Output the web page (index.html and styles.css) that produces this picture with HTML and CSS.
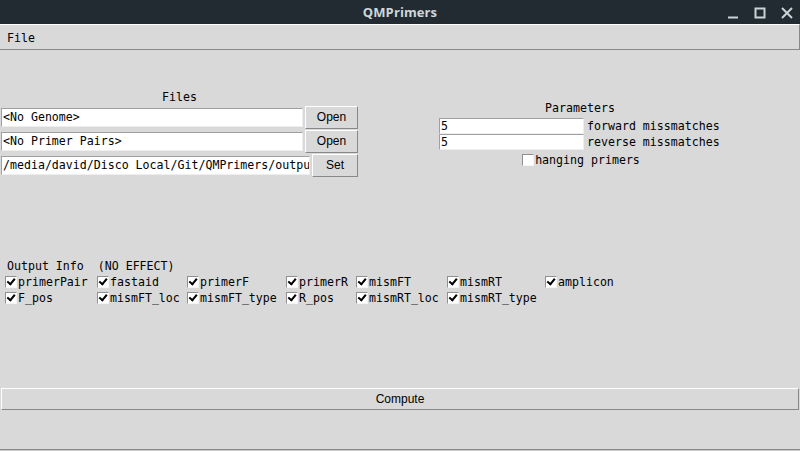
FILE: index.html
```html
<!DOCTYPE html>
<html>
<head>
<meta charset="utf-8">
<link rel="stylesheet" href="styles.css">
</head>
<body>
<div class="window">
  <div class="titlebar">
    <span></span>
    <span class="title">QMPrimers</span>
    <span class="controls">
      <svg width="12" height="12" viewBox="0 0 12 12"><path d="M1 10.5h10" stroke="#c9d3d8" stroke-width="2"/></svg>
      <svg width="12" height="12" viewBox="0 0 12 12"><rect x="1.5" y="1.5" width="9" height="9" fill="none" stroke="#c9d3d8" stroke-width="2"/></svg>
      <svg width="12" height="12" viewBox="0 0 12 12"><path d="M1 1L11 11M11 1L1 11" stroke="#c9d3d8" stroke-width="2"/></svg>
    </span>
  </div>
  <div class="menubar"><span class="menu">File</span></div>
  <div class="main">
    <div class="top">
      <div class="files">
        <div class="frame-label">Files</div>
        <div class="frow">
          <div class="entry e1">&lt;No Genome&gt;</div>
          <div class="btn b-open">Open</div>
        </div>
        <div class="frow">
          <div class="entry e1">&lt;No Primer Pairs&gt;</div>
          <div class="btn b-open">Open</div>
        </div>
        <div class="frow">
          <div class="entry e3">/media/david/Disco Local/Git/QMPrimers/outpu</div>
          <div class="btn b-set">Set</div>
        </div>
      </div>
      <div class="params">
        <div class="frame-label">Parameters</div>
        <div class="prow"><div class="entry pe">5</div><span class="lbl">forward missmatches</span></div>
        <div class="prow"><div class="entry pe">5</div><span class="lbl">reverse missmatches</span></div>
        <div class="hang"><span class="cb"></span><span class="lbl">hanging primers</span></div>
      </div>
    </div>
    <div class="output-label">Output Info  (NO EFFECT)</div>
    <div class="checks">
      <div class="ck"><span class="cb on"></span>primerPair</div>
      <div class="ck"><span class="cb on"></span>fastaid</div>
      <div class="ck"><span class="cb on"></span>primerF</div>
      <div class="ck"><span class="cb on"></span>primerR</div>
      <div class="ck"><span class="cb on"></span>mismFT</div>
      <div class="ck"><span class="cb on"></span>mismRT</div>
      <div class="ck"><span class="cb on"></span>amplicon</div>
      <div class="ck"><span class="cb on"></span>F_pos</div>
      <div class="ck"><span class="cb on"></span>mismFT_loc</div>
      <div class="ck"><span class="cb on"></span>mismFT_type</div>
      <div class="ck"><span class="cb on"></span>R_pos</div>
      <div class="ck"><span class="cb on"></span>mismRT_loc</div>
      <div class="ck"><span class="cb on"></span>mismRT_type</div>
    </div>
    <div class="compute">Compute</div>
  </div>
  <div class="bottom"></div>
</div>
</body>
</html>
```
FILE: styles.css
```css
html, body {
  margin: 0;
  padding: 0;
}
body {
  width: 800px;
  height: 451px;
  overflow: hidden;
  background: #d9d9d9;
  font-family: "DejaVu Sans Mono", "Liberation Mono", monospace;
  font-size: 11.6px;
  color: #000;
}
.window {
  display: flex;
  flex-direction: column;
  height: 451px;
}
.titlebar {
  height: 24px;
  background: #222b31;
  display: grid;
  grid-template-columns: 1fr auto 1fr;
  align-items: center;
}
.title {
  font-family: "Open Sans", "DejaVu Sans", sans-serif;
  font-weight: bold;
  font-size: 13px;
  color: #cdd7dc;
  letter-spacing: 0.1px;
}
.controls {
  justify-self: end;
  display: flex;
  gap: 15px;
  padding-right: 7px;
  padding-top: 1px;
}
.menubar {
  height: 24px;
  border-top: 1px solid #ffffff;
  border-bottom: 1px solid #888888;
  border-right: 1px solid #888888;
  display: flex;
  align-items: center;
  box-sizing: content-box;
}
.menu {
  padding-left: 7px;
  padding-top: 1px;
}
.main {
  flex: 1;
  display: flex;
  flex-direction: column;
}
.top {
  display: flex;
  align-items: flex-start;
}
.files {
  width: 357px;
  padding-left: 1px;
  padding-top: 40px;
}
.frame-label {
  text-align: center;
  height: 14px;
  line-height: 14px;
}
.files .frame-label {
  margin-bottom: 2px;
}
.frow {
  display: flex;
  align-items: center;
  height: 23px;
  margin-bottom: 1px;
}
.frow + .frow {
  margin-top: 1px;
}
.entry {
  background: #ffffff;
  border-top: 1px solid #a0a0a0;
  border-left: 1px solid #a0a0a0;
  border-bottom: 1px solid #eeeeee;
  border-right: 1px solid #eeeeee;
  height: 17px;
  line-height: 17px;
  padding-left: 1px;
  white-space: nowrap;
  overflow: hidden;
  box-sizing: content-box;
}
.e1 {
  width: 299px;
}
.e3 {
  width: 306px;
}
.btn {
  font-family: "Liberation Sans", Arial, sans-serif;
  font-size: 12px;
  text-align: center;
  border-top: 1px solid #ffffff;
  border-left: 1px solid #ffffff;
  border-bottom: 1px solid #888888;
  border-right: 1px solid #888888;
  height: 21px;
  line-height: 21px;
  box-sizing: content-box;
}
.b-open {
  width: 51px;
  margin-left: 2px;
}
.b-set {
  width: 44px;
  margin-left: 2px;
}
.params {
  margin-left: 81px;
  padding-top: 51px;
  width: 282px;
  display: flex;
  flex-direction: column;
}
.params .frame-label {
  margin-bottom: 3px;
}
.prow {
  display: flex;
  align-items: center;
  height: 16px;
}
.pe {
  width: 142px;
  height: 14px;
  line-height: 14px;
  margin-right: 3px;
}
.hang {
  display: flex;
  align-items: center;
  justify-content: center;
  margin-top: 3px;
  height: 13px;
  padding-left: 2px;
}
.cb {
  display: inline-block;
  width: 10px;
  height: 10px;
  background: #ffffff;
  border-top: 1px solid #909090;
  border-left: 1px solid #909090;
  border-bottom: 1px solid #f4f4f4;
  border-right: 1px solid #f4f4f4;
  margin-right: 1px;
  flex: none;
  position: relative;
}
.cb.on::after {
  content: "";
  position: absolute;
  left: 2px;
  top: 0px;
  width: 3px;
  height: 6px;
  border-right: 2px solid #000;
  border-bottom: 2px solid #000;
  transform: rotate(40deg);
  transform-origin: 60% 60%;
}
.output-label {
  white-space: pre;
  margin-top: 81px;
  padding-left: 7px;
  height: 14px;
  line-height: 14px;
}
.checks {
  display: grid;
  grid-template-columns: 92px 90px 99px 70px 91px 98px auto;
  grid-auto-rows: 16px;
  padding-left: 5px;
  margin-top: 1px;
}
.ck {
  display: flex;
  align-items: center;
  white-space: nowrap;
}
.compute {
  margin-top: 82px;
  margin-left: 1px;
  margin-right: 1px;
  height: 20px;
  line-height: 20px;
  text-align: center;
  font-family: "Liberation Sans", Arial, sans-serif;
  font-size: 12px;
  border-top: 1px solid #ffffff;
  border-left: 1px solid #ffffff;
  border-bottom: 1px solid #888888;
  border-right: 1px solid #888888;
  box-sizing: content-box;
}
.bottom {
  margin-top: auto;
  height: 1px;
  border-top: 1px solid #8a8a8a;
  background: #c8c8c8;
}
```
